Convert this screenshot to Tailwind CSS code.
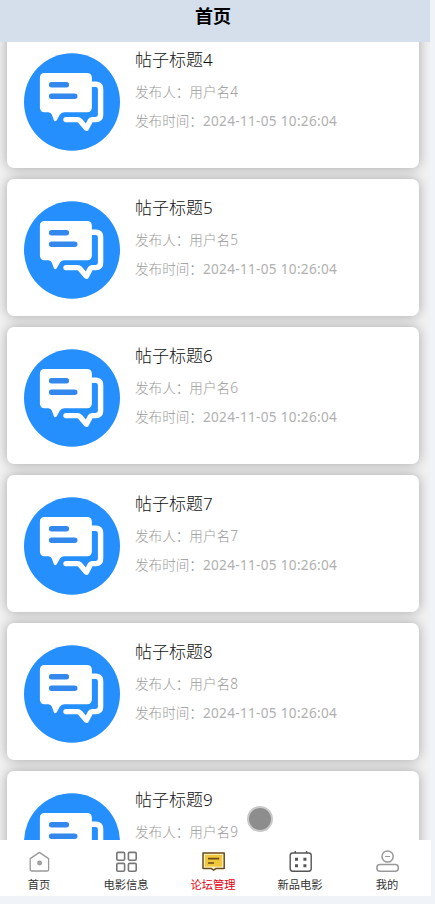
<!DOCTYPE html>
<html lang="zh-CN">
<head>
<meta charset="UTF-8">
<meta name="viewport" content="width=device-width, initial-scale=1">
<title>首页</title>
<script src="https://cdn.jsdelivr.net/npm/@tailwindcss/browser@4"></script>
</head>
<body class="h-screen overflow-hidden bg-[#f0f4f9] font-['Noto_Sans','Noto_Sans_CJK_SC',sans-serif]">
<svg class="hidden">
  <symbol id="forum" viewBox="0 0 96 98">
    <ellipse cx="48" cy="49" rx="48" ry="48.8" fill="#258ffd"/>
    <path d="M66 31.2h5.8q4.8 0 4.8 5v25.6q0 4.8-4.8 4.8h-3.4q-1.6 0-2.4 1.6l-3.6 7-6.4-7.4q-1-1.2-2.4-1.2H42" fill="none" stroke="#fff" stroke-width="5.4" stroke-linecap="round" stroke-linejoin="round"/>
    <path d="M20.5 20h42.4q5 0 5 5v29.3q0 5-5 5H40.5q-3 0-4.5 2.2l-3.3 5.8q-1.5 2-2.8 0l-2-5.5q-1-2.5-3.5-2.5h-3.9q-4.6 0-4.6-5V25q0-5 4.6-5z" fill="#fff"/>
    <path d="M27.6 31.8h14.8M27.6 43.2h23.2" stroke="#3388ee" stroke-width="5.4" stroke-linecap="round"/>
  </symbol>
</svg>
<div class="relative flex h-[896px] w-[431px] flex-col overflow-hidden">
  <header class="z-10 flex h-[42px] w-[430px] shrink-0 justify-center bg-[#d5deeb] pt-[3px] pr-[4px] text-[18px] leading-[27px] font-bold text-black">首页</header>
  <main id="posts" class="-mt-[11px] flex w-[430px] min-h-0 flex-1 flex-col gap-[11px] overflow-hidden bg-[#f1f1f1] pr-[11px] pl-[7px]"></main>
  <nav class="z-10 grid h-14 shrink-0 grid-cols-5 bg-white pr-px text-[11.3px] leading-[16px] text-[#333]">
    <a class="-ml-2 flex flex-col items-center gap-[3px] pt-[10px]">
      <svg class="h-6 w-6" viewBox="0 0 24 24" fill="none" stroke="#999" stroke-width="1.3" stroke-linejoin="round"><path d="M3.2 8.6 12.4 2.4l9.2 6.2v10.8q0 1.6-1.6 1.6H4.8q-1.6 0-1.6-1.6z"/><circle cx="12.6" cy="13" r="1.8" fill="#aaa"/></svg>
      <span>首页</span>
    </a>
    <a class="-ml-1.5 flex flex-col items-center gap-[3px] pt-[10px]">
      <svg class="h-6 w-6" viewBox="0 0 24 24" fill="none" stroke="#777" stroke-width="1.6"><rect x="2.8" y="2.4" width="7.8" height="7.8" rx="1.2"/><rect x="14.4" y="2.4" width="7.8" height="7.8" rx="1.2"/><rect x="2.8" y="13.4" width="7.8" height="7.8" rx="1.2"/><rect x="14.4" y="13.4" width="7.8" height="7.8" rx="1.2"/></svg>
      <span>电影信息</span>
    </a>
    <a class="-ml-1 flex flex-col items-center gap-[3px] pt-[10px] text-[#e60012]">
      <svg class="h-6 w-6" viewBox="0 0 24 24" stroke="#6b4a1b" stroke-width="1.5" stroke-linejoin="round"><path d="M2 3h21.2v15.4h-8l-2.6 1.8-2.6-1.8H2z" fill="#fff3c4"/><path d="M4 4.8h17.2v11.8H4z" fill="#f0c63c" stroke="none"/><path d="M7 8.6h11.2M7 13h6" fill="none" stroke-width="1.7"/></svg>
      <span>论坛管理</span>
    </a>
    <a class="-ml-0.5 flex flex-col items-center gap-[3px] pt-[10px]">
      <svg class="h-6 w-6" viewBox="0 0 24 24" fill="none" stroke="#555" stroke-width="1.4"><rect x="2.2" y="3" width="21" height="18.2" rx="2.4"/><path d="M7.3 1v2M18.6 1v2"/><path d="M7 9.2h3M15.4 9.2h3M7 15.8h3M15.4 15.8h3" stroke-width="3"/></svg>
      <span>新品电影</span>
    </a>
    <a class="flex flex-col items-center gap-[3px] pt-[10px]">
      <svg class="h-6 w-6" viewBox="0 0 24 24" fill="none" stroke="#999" stroke-width="1.5"><circle cx="12.6" cy="6.5" r="5.6"/><path d="M10.1 6.5h5" stroke-width="1"/><rect x="1.9" y="14.4" width="21.4" height="6.9" rx="3"/></svg>
      <span>我的</span>
    </a>
  </nav>
  <div class="absolute top-[806px] left-[247px] z-20 h-[26px] w-[26px] rounded-full border-2 border-[#c9c9c9] bg-[#8d8d8d]"></div>
</div>
<template id="post">
  <article class="flex h-[137px] shrink-0 rounded-[7px] bg-white pt-[22px] pl-[17px] shadow-[0_0_12px_rgba(0,0,0,0.31)]">
    <svg class="h-[98px] w-24 shrink-0"><use href="#forum"/></svg>
    <div class="pl-[15px] text-[13.6px] leading-5 whitespace-nowrap text-[#b0b0b0]">
      <h2 class="-mt-[5px] text-[17px] leading-6 font-light text-[#111]">帖子标题<span></span></h2>
      <p class="mt-[10px] font-light text-[#999]">发布人：用户名<span></span></p>
      <p class="post-time mt-[9px] font-light text-[#999]">发布时间：<time class="font-normal tracking-[0.3px] text-[#b0b0b0]">2024-11-05 10:26:04</time></p>
    </div>
  </article>
</template>
<script>
  const list = document.getElementById('posts');
  const tpl = document.getElementById('post');
  for (let n = 4; n <= 9; n++) {
    const card = tpl.content.cloneNode(true);
    card.querySelectorAll('span').forEach(s => { s.textContent = n; });
    // The last card's time line lies wholly behind the tab bar.
    if (n === 9) card.querySelector('.post-time').classList.add('invisible');
    list.append(card);
  }
</script>
</body>
</html>
